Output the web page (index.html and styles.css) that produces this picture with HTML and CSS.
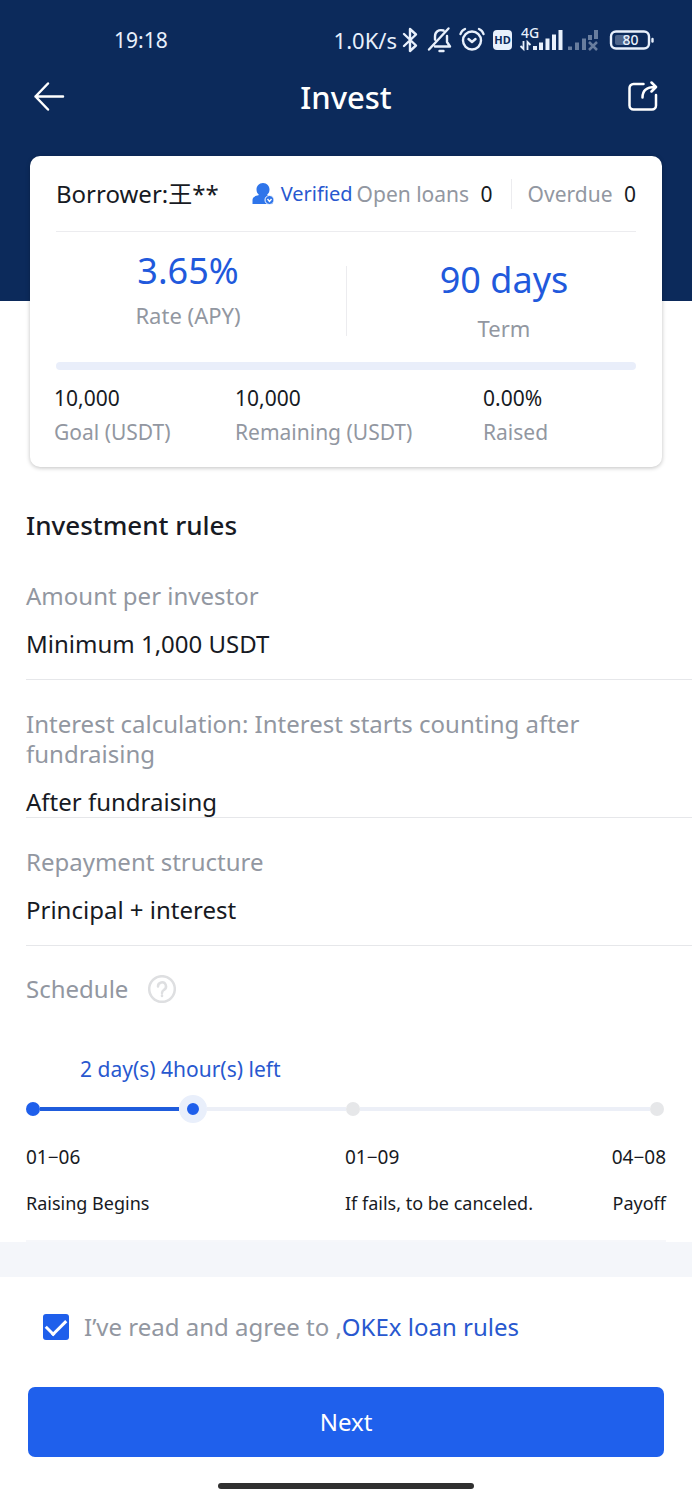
FILE: index.html
```html
<!DOCTYPE html>
<html lang="en">
<head>
<meta charset="utf-8">
<meta name="viewport" content="width=device-width, initial-scale=1">
<title>Invest</title>
<link rel="stylesheet" href="styles.css">
</head>
<body>
<header class="top">
  <div class="status">
    <span class="clock">19:18</span>
    <div class="indicators">
      <span class="speed">1.0K/s</span>
      <svg class="status-icons" width="258" height="32" viewBox="0 0 258 32" aria-hidden="true">
        <g fill="none" stroke="currentColor" stroke-width="2.4" stroke-linecap="round" stroke-linejoin="round">
          <path d="M7 10l12 11.500-6 5.500V5l6 5.500L7 22"/>
          <path d="M38 22.500h15l-3-4.500V12M46.500 6.500c-5-1.500-8.500 1.500-8.500 6v3M32 25.500L51.500 4.500M42.500 27h4"/>
          <circle cx="75" cy="16.500" r="9"/>
          <path d="M71.500 15l3.500 3 3.500-3M63.500 10q1-3.500 4.500-5M86.500 10q-1-3.500-4.500-5"/>
          <rect x="214" y="7.500" width="38" height="17" rx="5"/>
          <path d="M255.500 15v2.500"/>
        </g>
        <rect x="96" y="6" width="19" height="20" rx="4" fill="currentColor"/>
        <text x="105.500" y="20" class="hd">HD</text>
        <text x="124" y="14" class="net">4G</text>
        <path d="M126.500 17v8l-3-3M130.500 26v-8l3 3" fill="none" stroke="currentColor" stroke-width="1.800"/>
        <path d="M136 22h4v4h-4zM142 18.500h4V26h-4zM148.500 14.500h4V26h-4zM155 10.500h4V26h-4zM161.500 6h4v20h-4z" fill="currentColor"/>
        <g opacity=".42">
          <path d="M171 22.500h4V26h-4zM178 18.500h4V26h-4zM185 14.500h4V26h-4zM191 11h4v5h-4zM197 6h4v9h-4z" fill="currentColor"/>
          <path d="M192 18l8 8M200 18l-8 8" stroke="currentColor" stroke-width="2.500"/>
        </g>
        <rect x="218" y="11" width="14" height="10" rx="2" fill="currentColor" opacity=".3"/>
        <text x="233.500" y="21" class="batt">80</text>
      </svg>
    </div>
  </div>
  <nav class="nav">
    <button class="icon-btn" aria-label="Back"><svg width="32" height="32" viewBox="0 0 32 32"><path d="M15 2.500L2.500 15.500 15 28.500M2.500 15.500h27.500"/></svg></button>
    <h1>Invest</h1>
    <button class="icon-btn" aria-label="Share"><svg width="32" height="32" viewBox="0 0 32 32"><path d="M16.500 3H6.500a4 4 0 0 0-4 4v17.500a4 4 0 0 0 4 4H25a4 4 0 0 0 4-4V14M15.500 16.500c0-7 4-10.500 12.500-10.500M24.500 1.500L29 6l-4.500 4.500"/></svg></button>
  </nav>
</header>
<main>
  <section class="card">
    <div class="card-head">
      <span class="borrower">Borrower:王**</span>
      <span class="verified"><svg width="23" height="22" viewBox="0 0 23 22" aria-hidden="true"><path d="M11 0c4 0 6.500 3 6.500 6.500 0 2.500-1 4-2.500 5.500 3.500.8 6 2 6 4.500V21H.500v-4c0-3 2.500-4 6.500-5-1.500-1.500-2.500-3-2.500-5.500C4.500 3 7 0 11 0z" fill="#2f75ea"/><circle cx="17.500" cy="17" r="4.500" fill="#2f75ea" stroke="#fff"/><path d="M15.500 16l2 2.500 2-2.500" fill="none" stroke="#fff" stroke-width="1.400"/></svg>Verified</span>
      <span class="stat">Open loans <b>0</b></span>
      <span class="stat overdue">Overdue <b>0</b></span>
    </div>
    <div class="figures">
      <div class="figure"><strong>3.65%</strong><span>Rate (APY)</span></div>
      <div class="figure term"><strong>90 days</strong><span>Term</span></div>
    </div>
    <div class="progress" role="progressbar" aria-label="Raised" aria-valuenow="0" aria-valuemin="0" aria-valuemax="100"></div>
    <dl class="totals">
      <div><dd>10,000</dd><dt>Goal (USDT)</dt></div>
      <div><dd>10,000</dd><dt>Remaining (USDT)</dt></div>
      <div><dd>0.00%</dd><dt>Raised</dt></div>
    </dl>
  </section>
  <section class="rules">
    <h2>Investment rules</h2>
    <dl>
      <div class="rule"><dt>Amount per investor</dt><dd>Minimum 1,000 USDT</dd></div>
      <div class="rule tight"><dt>Interest calculation: Interest starts counting after fundraising</dt><dd>After fundraising</dd></div>
      <div class="rule"><dt>Repayment structure</dt><dd>Principal + interest</dd></div>
    </dl>
  </section>
  <section class="schedule">
    <h3>Schedule <button class="help" aria-label="About the schedule"><svg width="28" height="28" viewBox="0 0 28 28"><circle cx="14" cy="14" r="12.800"/><path d="M10 11.500a4 4 0 1 1 6 3.300c-1.500 1-2 1.700-2 3.200M14 20.500v.5"/></svg></button></h3>
    <p class="left">2 day(s) 4hour(s) left</p>
    <div class="track"><i class="dot done"></i><i class="bar filled"></i><i class="dot now"></i><i class="bar"></i><i class="dot"></i><i class="bar wide"></i><i class="dot"></i></div>
    <ol class="steps">
      <li><time>01−06</time><span>Raising Begins</span></li>
      <li><time>01−09</time><span>If fails, to be canceled.</span></li>
      <li><time>04−08</time><span>Payoff</span></li>
    </ol>
  </section>
</main>
<footer>
  <div class="agree"><input type="checkbox" id="agree" checked><label for="agree">I’ve read and agree to ,</label><a href="#">OKEx loan rules</a></div>
  <button class="next">Next</button>
  <div class="home"></div>
</footer>
</body>
</html>
```
FILE: styles.css
```css
* { box-sizing: border-box; }
body, h1, h2, h3, p, dl, dd, ol { margin: 0; padding: 0; }
body { background: #fff; color: #171a23; font-family: "Noto Sans", "Noto Sans CJK SC", sans-serif; font-size: 24px; line-height: 30px; }
button { padding: 0; border: 0; background: none; color: inherit; font: inherit; }
svg { display: block; flex: none; }
.top { padding: 24px 0 149px; background: #0c2a5b; color: #fff; }
.status { display: flex; justify-content: space-between; align-items: center; height: 32px; padding: 0 37px 0 114px; color: #e8f0fc; font-size: 22px; }
.clock { font-size: 21px; }
.indicators { display: flex; align-items: center; }
.hd, .batt, .net { font-family: "Noto Sans", sans-serif; }
.hd { fill: #0c2a5b; font-size: 11px; text-anchor: middle; font-weight: 700; }
.batt { fill: currentColor; font-size: 14px; font-weight: 500; text-anchor: middle; }
.net { fill: currentColor; font-size: 14px; font-weight: 500; }
.nav { display: grid; grid-template-columns: 32px 1fr 32px; align-items: center; padding: 24px 33px 38px; }
.icon-btn svg, .help svg { fill: none; stroke: currentColor; stroke-width: 2.500; stroke-linecap: round; stroke-linejoin: round; }
h1 { font-size: 31px; line-height: 34px; font-weight: 500; text-align: center; }
.card { margin: -145px 30px 0; padding: 0 26px 20px; background: #fff; border-radius: 10px; box-shadow: 0 1px 4px rgba(0, 0, 0, .25); }
.card-head { display: flex; align-items: center; height: 76px; border-bottom: 1px solid #ececef; font-size: 20px; white-space: nowrap; }
.borrower { font-size: 24px; }
.verified { display: flex; align-items: center; gap: 6px; margin-left: auto; color: #2858cf; }
.stat { margin-left: 4px; color: #9297a1; font-size: 21px; }
.stat b { margin-left: 6px; color: #171a23; font-weight: 400; }
.overdue { margin-left: 18px; padding-left: 16px; border-left: 1px solid #ececef; }
.figures { display: flex; margin: 0 -26px; padding-top: 16px; }
.figure { flex: 1; display: flex; flex-direction: column; align-items: center; gap: 6px; height: 114px; }
.figure strong { color: #2159dc; font-size: 36px; line-height: 46px; font-weight: 400; }
.figure span { font-size: 22px; }
.totals { font-size: 21px; }
.figure span, dt { color: #9297a1; }
.term { gap: 10px; padding-top: 9px; background: linear-gradient(#ececef, #ececef) 0 18px / 1px 70px no-repeat; }
.progress { height: 8px; border-radius: 4px; background: #e9eefa; }
.totals { display: grid; grid-template-columns: 181px 248px 1fr; margin: 13px -2px 0; }
.totals div { display: flex; flex-direction: column; gap: 4px; }
.rules { padding: 43px 0 0 26px; }
h2 { font-size: 26px; line-height: 30px; font-weight: 500; }
.rules dl { padding-top: 12px; }
.rule { padding: 29px 60px 20px 0; border-bottom: 1px solid #e6e7ea; }
.rule dd { margin-top: 18px; }
.rule.tight { padding-bottom: 0; }
.schedule { padding: 28px 26px 0; }
h3 { display: flex; align-items: center; gap: 20px; color: #9297a1; font-size: 24px; font-weight: 400; }
.help { color: #dedfe1; }
.left { margin: 50px 0 11px 54px; color: #2858cf; font-size: 21px; line-height: 30px; }
.track { display: flex; align-items: center; height: 28px; padding-right: 2px; }
.dot { width: 14px; height: 14px; border-radius: 50%; background: #e6e7e9; }
.done { background: #1f5feb; }
.now { width: 28px; height: 28px; border: 8px solid #e9effb; background: #1f5feb; }
.bar { flex: 139; height: 4px; background: #eceff7; }
.filled { background: #1f5cdc; }
.wide { flex: 291; }
.steps { display: grid; grid-template-columns: 319px 1fr auto; margin-top: 19px; padding-bottom: 22px; border-bottom: 2px solid #f6f7fa; list-style: none; }
.steps li { display: flex; flex-direction: column; gap: 16px; font-size: 18px; }
.steps time { font-size: 19px; }
.steps li:last-child { text-align: right; }
footer { padding: 35px 28px 10px; border-top: 35px solid #f4f6fa; }
.agree { display: flex; align-items: center; padding-left: 15px; color: #9297a1; }
.agree input { appearance: none; width: 26px; height: 26px; margin: 0 15px 0 0; border-radius: 3px; background: #1f5feb; display: grid; place-items: center; }
.agree input:checked::before { content: ""; width: 17px; height: 9px; margin-bottom: 5px; border: solid #fff; border-width: 0 0 3px 3px; rotate: -45deg; }
.agree a { color: #2858cf; text-decoration: none; }
.next { display: block; width: 100%; height: 70px; margin-top: 45px; border-radius: 7px; background: #1f60ec; color: #fff; }
.home { width: 256px; height: 6px; margin: 26px auto 0; border-radius: 3px; background: #303030; }
```
